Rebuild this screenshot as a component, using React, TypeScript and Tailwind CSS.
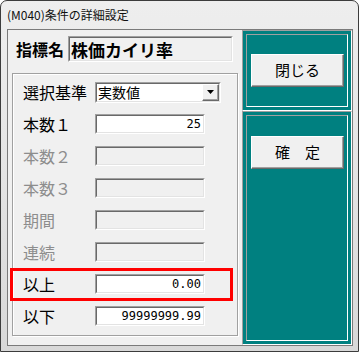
import React from "react";

const JP = { fontFamily: '"Noto Sans CJK JP", "Noto Sans", sans-serif' };
const MONO = { fontFamily: '"DejaVu Sans Mono", "Liberation Mono", monospace' };

const Field: React.FC<{ value?: string; disabled?: boolean }> = ({ value, disabled }) => (
  <div className="w-[110px] h-[20px] border border-t-[#a0a0a0] border-l-[#a0a0a0] border-b-white border-r-white">
    <div
      className={
        disabled
          ? "h-full border border-t-[#696969] border-l-[#696969] border-b-[#e3e3e3] border-r-[#e3e3e3] bg-[#f0f0f0]"
          : "h-full border border-t-[#696969] border-l-[#696969] border-b-[#e3e3e3] border-r-[#e3e3e3] bg-white flex items-center justify-end pr-[2px] text-[12px] leading-none text-black"
      }
      style={MONO}
    >
      {value}
    </div>
  </div>
);

const Row: React.FC<{ label: string; disabled?: boolean; children: React.ReactNode; highlight?: boolean }> = ({
  label,
  disabled,
  children,
  highlight,
}) => (
  <div className="relative h-[32px] flex items-center">
    {highlight && (
      <div className="absolute left-[-13px] top-0 w-[223px] h-[33px] border-[3px] border-[#ff0000] pointer-events-none" />
    )}
    <span className={disabled ? "w-[72px] text-[16px] text-[#8d8d8d]" : "w-[72px] text-[16px] text-black"}>{label}</span>
    {children}
  </div>
);

const WinButton: React.FC<{ children: React.ReactNode; className?: string }> = ({ children, className }) => (
  <div
    className={`ml-[4px] w-[93px] h-[33px] bg-[#f0f0f0] border border-t-white border-l-white border-b-[#696969] border-r-[#696969] shadow-[inset_-1px_-1px_0_#a0a0a0] flex items-center justify-center text-[15px] text-black ${className ?? ""}`}
  >
    {children}
  </div>
);

export default function App() {
  return (
    <div
      className="w-[359px] h-[352px] rounded-t-[7px] border border-[#3c3c3c] bg-gradient-to-b from-[#eeeeee] via-[#e4e4e4] to-[#d8d8d8] flex flex-col overflow-hidden"
      style={JP}
    >
      {/* Title bar */}
      <div className="h-[28px] flex items-center pl-[6px] text-[12px] text-[#101010]">(M040)条件の詳細設定</div>

      {/* Client area */}
      <div className="ml-[6px] w-[346px] h-[317px] border border-[#7a7a7a] bg-[#f0f0f0] flex">
        {/* Left column */}
        <div className="w-[234px] flex flex-col">
          <div className="pt-[6px] pl-[8px] flex items-center">
            <span className="w-[52px] text-[16px] font-bold text-black">指標名</span>
            <div className="w-[165px] h-[26px] border border-t-[#a0a0a0] border-l-[#a0a0a0] border-b-white border-r-white">
              <div className="h-full border border-t-[#696969] border-l-[#696969] border-b-[#e3e3e3] border-r-[#e3e3e3] flex items-center pl-[1px] text-[17px] font-bold text-black leading-none">
                株価カイリ率
              </div>
            </div>
          </div>

          <div className="ml-[4px] mt-[11px] w-[226px] h-[263px] border border-[#a0a0a0] shadow-[inset_1px_1px_0_#ffffff,1px_1px_0_#ffffff] pt-[2px] pl-[10px]">
            <Row label="選択基準">
              <div className="w-[126px] h-[21px] border border-t-[#a0a0a0] border-l-[#a0a0a0] border-b-white border-r-white">
                <div className="h-full border border-t-[#696969] border-l-[#696969] border-b-[#e3e3e3] border-r-[#e3e3e3] bg-white flex items-center">
                  <span className="flex-1 pl-[1px] text-[14px] leading-none text-black">実数値</span>
                  <div className="w-[17px] h-[17px] bg-[#f0f0f0] border border-t-white border-l-white border-b-[#696969] border-r-[#696969] shadow-[inset_-1px_-1px_0_#a0a0a0] flex items-center justify-center">
                    <svg width="7" height="4" viewBox="0 0 7 4">
                      <path d="M0 0h7L3.5 4z" fill="#000" />
                    </svg>
                  </div>
                </div>
              </div>
            </Row>
            <Row label="本数１">
              <Field value="25" />
            </Row>
            <Row label="本数２" disabled>
              <Field disabled />
            </Row>
            <Row label="本数３" disabled>
              <Field disabled />
            </Row>
            <Row label="期間" disabled>
              <Field disabled />
            </Row>
            <Row label="連続" disabled>
              <Field disabled />
            </Row>
            <Row label="以上" highlight>
              <Field value="0.00" />
            </Row>
            <Row label="以下">
              <Field value="99999999.99" />
            </Row>
          </div>
        </div>

        {/* Right teal column */}
        <div className="w-[110px] flex flex-col">
          <div className="h-[81px] bg-[#008080] border border-t-[#a0a0a0] border-l-[#a0a0a0] border-b-white border-r-white p-[3px]">
            <div className="h-full border border-t-[#a0a0a0] border-l-[#a0a0a0] border-b-white border-r-white pt-[19px]">
              <WinButton>閉じる</WinButton>
            </div>
          </div>
          <div className="h-[234px] bg-[#008080] border border-t-[#a0a0a0] border-l-[#a0a0a0] border-b-white border-r-white p-[3px]">
            <div className="h-full border border-t-[#a0a0a0] border-l-[#a0a0a0] border-b-white border-r-white pt-[20px]">
              <WinButton>確　定</WinButton>
            </div>
          </div>
        </div>
      </div>
    </div>
  );
}
